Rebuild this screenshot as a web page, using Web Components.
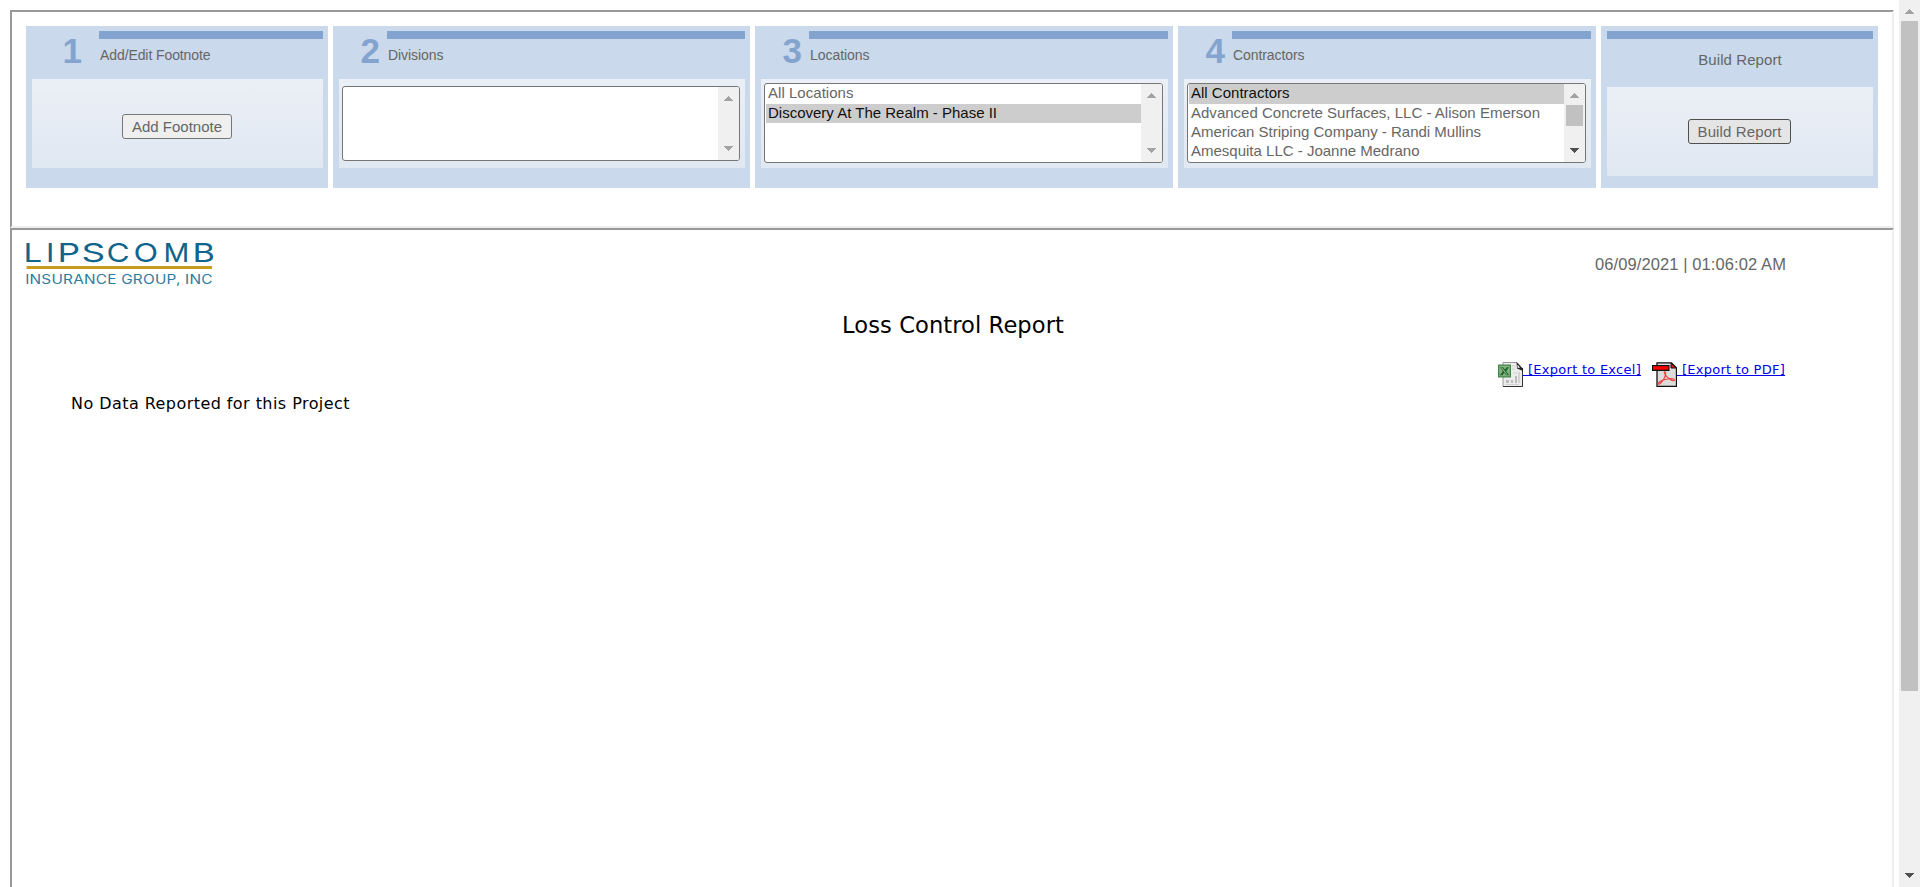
<!DOCTYPE html>
<html lang="en">
<head>
<meta charset="utf-8">
<title>Loss Control Report</title>
<style>
html,body{margin:0;height:100%;overflow:hidden;background:#fff}
body{font-family:"Liberation Sans",Arial,sans-serif;color:#666}
</style>
</head>
<body>
<report-page></report-page>
<script>
const define=(name,html,setup)=>customElements.define(name,class extends HTMLElement{
  connectedCallback(){
    if(this.shadowRoot)return;
    const root=this.attachShadow({mode:'open'});
    const t=document.createElement('template');
    t.innerHTML=html;
    root.append(t.content.cloneNode(true));
    if(setup)setup.call(this,root);
  }
});

/* Text run whose tracking is adjusted to an exact advance width. */
define('fit-text',`<style>:host{display:inline-block;white-space:pre}</style><span><slot></slot></span>`,function(root){
  const span=root.querySelector('span'),w=+this.getAttribute('w'),n=this.textContent.length;
  const natural=span.getBoundingClientRect().width;
  span.style.letterSpacing=((w-natural)/n).toFixed(4)+'px';
});

define('scroll-bar',`<style>
:host{display:flex;flex-direction:column;justify-content:space-between;width:21px;flex:none;background:#f0f0f0;box-sizing:border-box;padding:var(--pad,9px) 0}
svg{display:block;width:9px;height:5px;margin-left:6px;flex:none;fill:#a3a3a3}
svg.on{fill:#505050}
i{display:none;width:17px;margin-left:2px;background:#c1c1c1;margin-top:7px;flex:none}
b{flex:1}
</style>
<svg viewBox="0 0 9 5" shape-rendering="crispEdges"><path d="M4 0h1v1h1v1h1v1h1v1h1v1H0V4h1V3h1V2h1V1h1z"/></svg><i></i><b></b>
<svg class="down" viewBox="0 0 9 5" shape-rendering="crispEdges"><path d="M0 0h9v1H8v1H7v1H6v1H5v1H4V4H3V3H2V2H1V1H0z"/></svg>`,function(root){
  const th=this.getAttribute('thumb');
  if(th){const i=root.querySelector('i');i.style.display='block';i.style.height=th+'px';root.querySelector('.down').classList.add('on');}
});

define('list-option',`<style>
:host{display:block;height:19px;line-height:17px;padding-left:2px;font-size:15px;color:#666;white-space:nowrap}
:host([first]){height:20px;line-height:18px}
:host([selected]){background:#cdcdcd;color:#101010}
</style><slot></slot>`);

define('list-box',`<style>
:host{display:flex;box-sizing:border-box;border:1px solid #767676;border-radius:3px;background:#fff;height:80px;overflow:hidden;--pad:9px}
:host([short]){height:75px}
div{flex:1;padding-left:1px;min-width:0}
</style><div><slot></slot></div><scroll-bar></scroll-bar>`,function(root){
  if(this.hasAttribute('thumb')){
    const bar=document.createElement('scroll-bar');bar.setAttribute('thumb',this.getAttribute('thumb'));
    root.querySelector('scroll-bar').replaceWith(bar);
  }
});

define('push-button',`<style>
:host{display:block}
button{display:block;box-sizing:border-box;height:25px;width:var(--w);padding:0;text-align:center;font:15px/21px "Liberation Sans",Arial,sans-serif;color:#666;border:1px solid #767676;border-radius:3px;background:#efefef;white-space:nowrap}
:host([active]) button{background:#e5e5e5;border-color:#4f4f4f}
</style><button><slot></slot></button>`);

define('step-panel',`<style>
:host{display:block;box-sizing:border-box;height:162px;background:#cad9eb;padding:5px 5px 0 6px}
header{display:flex;height:48px}
.num{width:var(--nw);box-sizing:border-box;padding-right:var(--nr,7px);text-align:right;font:bold 35px/39px "Liberation Sans",Arial,sans-serif;color:#84a4d0}
.head{flex:1;border-top:8px solid #84a4d0;font-size:14px;line-height:16px;padding:8px 0 0 1px}
.body{height:89px;box-sizing:border-box;background:linear-gradient(#ebeff6,#e0e8f2);padding:var(--bp,4px 5px 0 3px)}
:host([plain]) .num{display:none}
:host([plain]) .head{text-align:center;font-size:15px;line-height:17px;padding:12px 0 0 0}
:host([plain]) header{height:56px}
:host([centered]) .body{display:grid;place-content:center;padding:5px 1px 0 0}
:host([plain]) .body{padding:0 1px 0 0}
</style>
<header><div class="num"><slot name="num"></slot></div><div class="head"><slot name="title"></slot></div></header>
<div class="body"><slot></slot></div>`);

/* Wordmark: each wide letter is placed by its left stem and stretched on its own. */
define('brand-logo',`<style>:host{display:block;width:220px;height:62px;margin:-12px 0 0 -8px}svg{display:block;overflow:visible}</style>
<svg width="220" height="62" viewBox="-8 -12 220 62">
<g fill="#0f658c" font-family="Inter,sans-serif" font-size="26">
<text transform="translate(-2.6 19.2) scale(1.27 1)">L</text>
<text transform="translate(20 19.2) scale(1.2 1)">I</text>
<text transform="translate(31.5 19.2) scale(1.36 1)">P</text>
<text transform="translate(55.6 19.2) scale(1.42 1)">S</text>
<text transform="translate(80.6 19.2) scale(1.22 1)">C</text>
<text transform="translate(107.6 19.2) scale(1.24 1)">O</text>
<text transform="translate(137.4 19.2) scale(1.1 1)">M</text>
<text transform="translate(166.6 19.2) scale(1.32 1)">B</text>
</g>
<rect x=".6" y="23" width="185.4" height="3" fill="#c99c20"/>
<text transform="translate(-.8 40.6) scale(1.22 1)" font-family="Inter,sans-serif" font-size="12.6" fill="#2f7b9c" textLength="153.500" lengthAdjust="spacing">INSURANCE GROUP, INC</text>
</svg>`);

define('export-link',`<style>
:host{display:block;height:25px}
a{display:flex;color:#0000ee;text-decoration:none;font:13px/25px "DejaVu Sans",Verdana,sans-serif;cursor:pointer}
svg{display:block;flex:none}
span{display:block;height:14px;line-height:16px;padding-left:5px;border-bottom:1px solid #0000ee;box-sizing:border-box;font-size:13px}
svg.pdf,:host([pdf]) svg.xls{display:none}
:host([pdf]) svg.pdf{display:block}
</style><a>
<svg class="xls" width="25" height="25" viewBox="0 0 25 25">
<path d="M5 .5h14l5.500 6v18H5z" fill="#ececec" stroke="#999"/><path d="M5 24.500h19.500V6" fill="none" stroke="#333"/>
<path d="M18.500 0l6.500 7v2l-6-2.500z" fill="#222"/><path d="M19.500 2.500l2.500 3.200h-2.500z" fill="#fff"/>
<path d="M8 18h3v3H8zM13 18h2v3h-2zM17 14h2v7h-2zM20.500 10h1v11h-1z" fill="#bbb"/><path d="M14 4h3M14 7h3M15 11h4M8 22.500h13" stroke="#ccc" stroke-width=".8"/>
<rect x="0" y="2.500" width="13" height="13" fill="#438345"/><rect x="1.200" y="3.700" width="10.600" height="10.600" fill="#86b384"/>
<path d="M2 5.200h3.200L7 7.600l1.700-2.400h2.300L8.200 9.200l3 4H8L6.200 10.800 4.600 13.200H1.800l3-4z" fill="#1c6a2b"/>
<path d="M3.500 5.700l5.500 7" stroke="#c5dcc3" stroke-width=".8"/>
</svg>
<svg class="pdf" width="25" height="25" viewBox="0 0 25 25">
<path d="M5 .8h14.500l5 5v18.500H5z" fill="#dcdcdc" stroke="#111" stroke-width="1.300"/><path d="M19 1v5h5z" fill="#e11" stroke="#111"/>
<rect x="0" y="3" width="17.500" height="6" fill="#111"/><rect x="1" y="4.200" width="15.300" height="3.500" fill="#fa0000"/>
<path d="M12.500 10c2-.5.8 4.500-.7 7-1.500 2.700-4.200 5.500-5.300 5-1.300-1 3.300-4 7-4.700 4-1 9-.8 9 .8 0 1.700-5.500-.6-8-3.700-1.600-2-2.500-4.200-2-4.400z" fill="none" stroke="#f04848" stroke-width="1.300"/>
</svg><span><slot></slot></span></a>`);

define('inset-frame',`<style>:host{display:block;box-sizing:border-box;border:2px solid;border-color:#999 #eee #eee #999;background:#fff}</style><slot></slot>`);

define('report-page',`<style>
:host{display:grid;grid-template-columns:1884px 21px;column-gap:5px;padding-left:10px;height:887px;overflow:hidden;box-sizing:border-box}
.frames{padding-top:10px;min-width:0}
.filters{height:218px;padding:14px 14px 0}
.steps{display:grid;grid-template-columns:302px 417px 418px 418px 277px;column-gap:5px}
.report{height:659px;padding:13px 14px 0}
.top{display:flex;justify-content:space-between;padding-right:92px;height:62px}
.date{font-size:16.5px;line-height:20px;padding-top:11px}
h1{margin:0;font:22.6px/30px "DejaVu Sans",Verdana,sans-serif;color:#000;padding-top:5px}
.title{display:flex;height:57px;padding-left:816px}
.exports{display:flex;justify-content:flex-end;gap:11px;padding-right:93px}
.none{margin:7px 0 0 45px;font:16px/20px "DejaVu Sans",Verdana,sans-serif;color:#000}
.page{--pad:9px}
</style>
<div class="frames">
<inset-frame class="filters"><div class="steps">
<step-panel centered style="--nw:67px;--nr:17px"><span slot="num">1</span><fit-text slot="title" w="110.5">Add/Edit Footnote</fit-text><push-button style="--w:110px"><fit-text w="90">Add Footnote</fit-text></push-button></step-panel>
<step-panel style="--nw:48px;--bp:7px 5px 0 3px"><span slot="num">2</span><fit-text slot="title" w="55.5">Divisions</fit-text><list-box short></list-box></step-panel>
<step-panel style="--nw:48px"><span slot="num">3</span><fit-text slot="title" w="59.5">Locations</fit-text><list-box><list-option first><fit-text w="85.5">All Locations</fit-text></list-option><list-option selected><fit-text w="229">Discovery At The Realm - Phase II</fit-text></list-option></list-box></step-panel>
<step-panel style="--nw:48px"><span slot="num">4</span><fit-text slot="title" w="71.5">Contractors</fit-text><list-box thumb="21"><list-option first selected><fit-text w="98.5">All Contractors</fit-text></list-option><list-option><fit-text w="349">Advanced Concrete Surfaces, LLC - Alison Emerson</fit-text></list-option><list-option><fit-text w="290">American Striping Company - Randi Mullins</fit-text></list-option><list-option><fit-text w="228.5">Amesquita LLC - Joanne Medrano</fit-text></list-option></list-box></step-panel>
<step-panel plain centered><fit-text slot="title" w="83.5">Build Report</fit-text><push-button active style="--w:103px"><fit-text w="84">Build Report</fit-text></push-button></step-panel>
</div></inset-frame>
<inset-frame class="report" style="border-bottom:0">
<div class="top"><brand-logo></brand-logo><div class="date"><fit-text w="191">06/09/2021 | 01:06:02 AM</fit-text></div></div>
<div class="title"><h1><fit-text w="222">Loss Control Report</fit-text></h1></div>
<div class="exports"><export-link><fit-text w="113">[Export to Excel]</fit-text></export-link><export-link pdf><fit-text w="103">[Export to PDF]</fit-text></export-link></div>
<div class="none"><fit-text w="279">No Data Reported for this Project</fit-text></div>
</inset-frame>
</div>
<scroll-bar class="page" thumb="670"></scroll-bar>`);
</script>
</body>
</html>
